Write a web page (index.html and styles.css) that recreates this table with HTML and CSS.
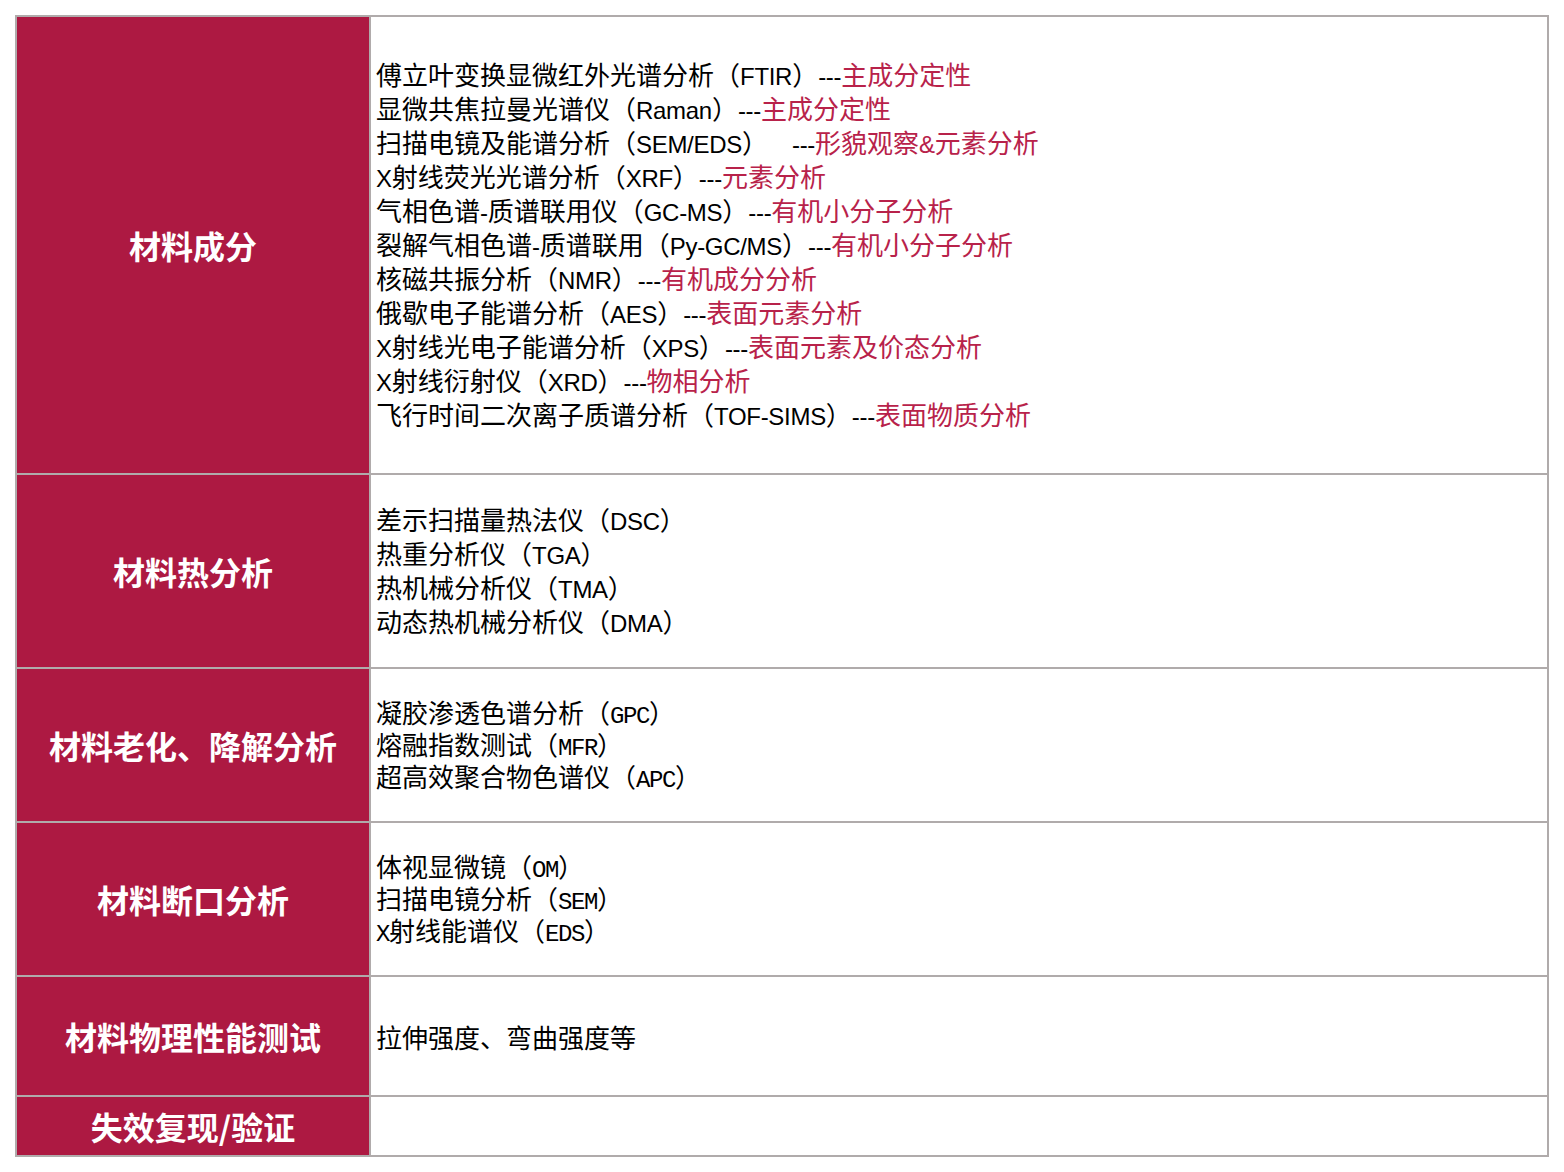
FILE: index.html
```html
<!DOCTYPE html>
<html lang="zh">
<head>
<meta charset="utf-8">
<title>材料分析</title>
<link rel="stylesheet" href="styles.css">
</head>
<body>
<div class="sheet">
  <div class="head">材料成分</div>
  <div class="body sans">
    <div>傅立叶变换显微红外光谱分析（<span class="e">FTIR</span>）<span class="e">---</span><span class="hl">主成分定性</span></div>
    <div>显微共焦拉曼光谱仪（<span class="e">Raman</span>）<span class="e">---</span><span class="hl">主成分定性</span></div>
    <div>扫描电镜及能谱分析（<span class="e">SEM/EDS</span>）<span class="e gap">---</span><span class="hl">形貌观察<span class="e">&amp;</span>元素分析</span></div>
    <div><span class="e">X</span>射线荧光光谱分析（<span class="e">XRF</span>）<span class="e">---</span><span class="hl">元素分析</span></div>
    <div>气相色谱<span class="e">-</span>质谱联用仪（<span class="e">GC-MS</span>）<span class="e">---</span><span class="hl">有机小分子分析</span></div>
    <div>裂解气相色谱<span class="e">-</span>质谱联用（<span class="e">Py-GC/MS</span>）<span class="e">---</span><span class="hl">有机小分子分析</span></div>
    <div>核磁共振分析（<span class="e">NMR</span>）<span class="e">---</span><span class="hl">有机成分分析</span></div>
    <div>俄歇电子能谱分析（<span class="e">AES</span>）<span class="e">---</span><span class="hl">表面元素分析</span></div>
    <div><span class="e">X</span>射线光电子能谱分析（<span class="e">XPS</span>）<span class="e">---</span><span class="hl">表面元素及价态分析</span></div>
    <div><span class="e">X</span>射线衍射仪（<span class="e">XRD</span>）<span class="e">---</span><span class="hl">物相分析</span></div>
    <div>飞行时间二次离子质谱分析（<span class="e">TOF-SIMS</span>）<span class="e">---</span><span class="hl">表面物质分析</span></div>
  </div>

  <div class="head">材料热分析</div>
  <div class="body sans">
    <div>差示扫描量热法仪（<span class="e">DSC</span>）</div>
    <div>热重分析仪（<span class="e">TGA</span>）</div>
    <div>热机械分析仪（<span class="e">TMA</span>）</div>
    <div>动态热机械分析仪（<span class="e">DMA</span>）</div>
  </div>

  <div class="head">材料老化、降解分析</div>
  <div class="body song">
    <div>凝胶渗透色谱分析（<span class="e">GPC</span>）</div>
    <div>熔融指数测试（<span class="e">MFR</span>）</div>
    <div>超高效聚合物色谱仪（<span class="e">APC</span>）</div>
  </div>

  <div class="head">材料断口分析</div>
  <div class="body song">
    <div>体视显微镜（<span class="e">OM</span>）</div>
    <div>扫描电镜分析（<span class="e">SEM</span>）</div>
    <div><span class="e">X</span>射线能谱仪（<span class="e">EDS</span>）</div>
  </div>

  <div class="head">材料物理性能测试</div>
  <div class="body song single">
    <div>拉伸强度、弯曲强度等</div>
  </div>

  <div class="head">失效复现/验证</div>
  <div class="body"></div>
</div>
</body>
</html>
```

FILE: styles.css
```css
html, body {
  margin: 0;
  padding: 0;
  background: #ffffff;
}

.sheet {
  margin: 15px 0 0 15px;
  width: 1530px;
  padding: 2px;
  background: #b0abab;
  display: grid;
  grid-template-columns: 352px 1176px;
  grid-template-rows: 456px 192px 152px 152px 118px 58px;
  gap: 2px;
}

.head {
  background: #ad1942;
  color: #ffffff;
  font-family: "Noto Sans CJK SC", "Liberation Sans", sans-serif;
  font-weight: 700;
  font-size: 32px;
  display: flex;
  align-items: center;
  justify-content: center;
}

.body {
  background: #ffffff;
  color: #000000;
  font-family: "Noto Sans CJK SC", sans-serif;
  font-size: 26px;
  padding-left: 5px;
  display: flex;
  flex-direction: column;
  justify-content: center;
  white-space: nowrap;
}

.body > div {
  height: 34px;
  line-height: 34px;
}

.e {
  line-height: 16px;
}

.sans {
  padding-bottom: 3px;
}

.sans .e {
  font-family: "Liberation Sans", sans-serif;
  font-size: 24px;
  letter-spacing: -0.3px;
}

.sans .gap {
  padding-left: 24px;
}

.song {
  padding-bottom: 2px;
}

.song > div {
  height: 32px;
  line-height: 32px;
}

.song .e {
  font-family: "Liberation Mono", monospace;
  font-size: 24px;
  letter-spacing: -1.4px;
}

.song.single {
  padding-bottom: 0;
}

.song.single > div {
  height: 34px;
  line-height: 34px;
  margin-top: 2px;
}

.hl {
  color: #b8224a;
}
```
